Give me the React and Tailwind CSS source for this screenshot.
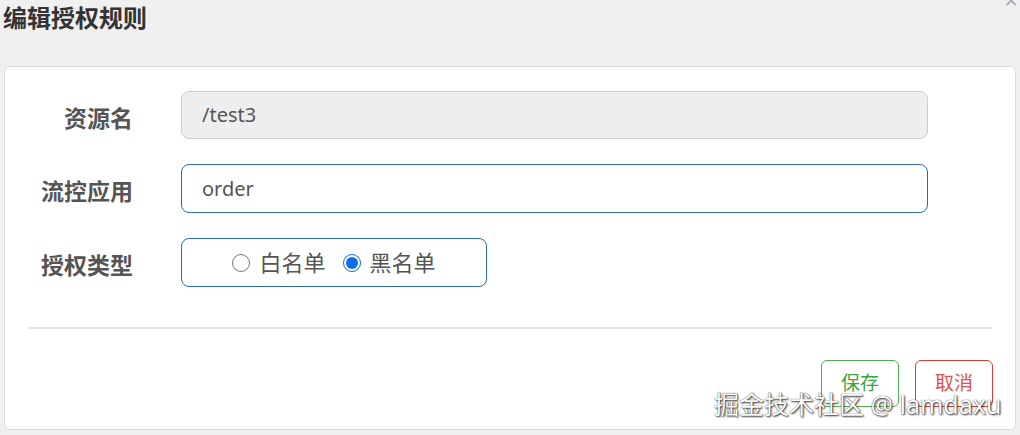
import React, { useState } from 'react';

const font = { fontFamily: '"Noto Sans", "Noto Sans CJK SC", sans-serif' };

const Row = ({ label, children }) => (
  <div className="flex items-center">
    <div className="mt-[6px] w-[128px] shrink-0 text-right text-[23px] font-bold text-[#555]">{label}</div>
    <div className="ml-[48px] flex-1">{children}</div>
  </div>
);

const Radio = ({ checked, label, onClick }) => (
  <label className="flex items-center cursor-pointer" onClick={onClick}>
    <span
      className={`flex h-[18px] w-[18px] items-center justify-center rounded-full border ${
        checked ? 'border-[#0b6cf0]' : 'border-[#767676]'
      } bg-white`}
    >
      {checked && <span className="h-[12px] w-[12px] rounded-full bg-[#0b6cf0]" />}
    </span>
    <span className="ml-[9px] text-[22px] text-[#555]">{label}</span>
  </label>
);

export default function App() {
  const [type, setType] = useState('black');

  return (
    <div className="relative h-[435px] w-[1020px] overflow-hidden bg-[#f0f0f0]" style={font}>
      <div className="flex h-[66px] items-start justify-between">
        <h1 className="ml-[3px] mt-[2px] text-[24px] font-bold leading-[32px] text-[#333]">编辑授权规则</h1>
        <span className="-mt-[12px] mr-[2px] text-[24px] leading-none text-[#aaa]">×</span>
      </div>

      <div className="mx-[4px] h-[364px] rounded-[6px] border border-[#dcdcdc] bg-white">
        <div className="flex flex-col gap-[25px] pt-[24px] pr-[87px]">
          <Row label="资源名">
            <div className="flex h-[48px] items-center rounded-[8px] border border-[#ccc] bg-[#eee] px-[20px] text-[20px] text-[#555]">
              /test3
            </div>
          </Row>
          <Row label="流控应用">
            <div className="flex h-[49px] items-center rounded-[8px] border border-[#2e6da4] bg-white px-[20px] text-[20px] text-[#555]">
              order
            </div>
          </Row>
          <Row label="授权类型">
            <div className="flex h-[49px] w-[306px] items-center justify-center gap-[17px] rounded-[8px] border border-[#2e6da4] bg-white">
              <Radio label="白名单" checked={type === 'white'} onClick={() => setType('white')} />
              <Radio label="黑名单" checked={type === 'black'} onClick={() => setType('black')} />
            </div>
          </Row>
        </div>

        <div className="mx-[23px] mt-[40px] h-[2px] bg-[#e3e3e3]" />

        <div className="mt-[31px] flex justify-end gap-[16px] pr-[22px]">
          <button className="h-[47px] w-[78px] rounded-[6px] border border-[#4cae4c] text-[19px] text-[#3aa53a]">保存</button>
          <button className="h-[47px] w-[78px] rounded-[6px] border border-[#d43f3a] text-[19px] text-[#d9534f]">取消</button>
        </div>
      </div>

      <div
        className="absolute left-[714px] top-[386px] text-[25px] leading-[36px] text-white"
        style={{ textShadow: '1px 1px 2px rgba(0,0,0,0.8), 0 0 1px rgba(0,0,0,0.9)' }}
      >
        掘金技术社区 @ lamdaxu
      </div>
    </div>
  );
}
